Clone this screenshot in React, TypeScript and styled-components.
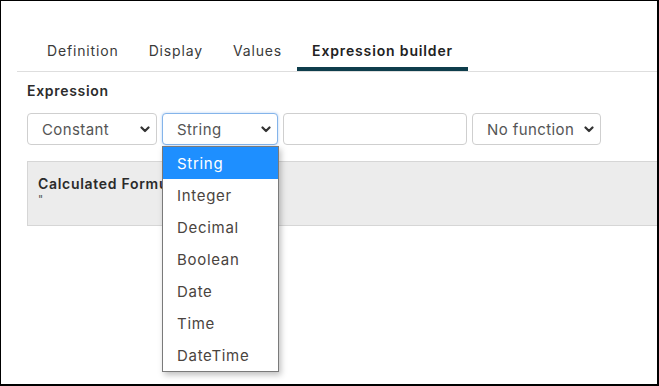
import React from 'react';
import styled, { createGlobalStyle } from 'styled-components';

const GlobalStyle = createGlobalStyle`
    html, body {
        margin: 0;
        padding: 0;
        background: #fff;
    }
    * {
        box-sizing: border-box;
    }
`;

const Frame = styled.div`
    width: 659px;
    height: 386px;
    border-style: solid;
    border-color: #000;
    border-width: 1px 2px 2px 1px;
    overflow: hidden;
    padding-top: 31px;
    font-family: Inter, "Open Sans", sans-serif;
    letter-spacing: 0.7px;
    color: #333;
`;

const TabBar = styled.nav`
    display: flex;
    margin-left: 16px;
    padding-left: 15px;
    border-bottom: 1px solid #dedede;
`;

const Tab = styled.div<{ active?: boolean }>`
    padding: 8px 15px 6px;
    font-size: 14px;
    line-height: 21px;
    letter-spacing: 0.85px;
    font-weight: ${p => (p.active ? 600 : 400)};
    color: ${p => (p.active ? '#222' : '#3a3a3a')};
    border-bottom: 4px solid ${p => (p.active ? '#0e3d4c' : 'transparent')};
`;

const Content = styled.div`
    padding-left: 26px;
`;

const Label = styled.div`
    margin-top: 9px;
    font-size: 14px;
    line-height: 20px;
    font-weight: 600;
    color: #2c2c2c;
`;

const Row = styled.div`
    display: flex;
    gap: 5px;
    margin-top: 12px;
`;

const SelectWrap = styled.div`
    position: relative;
`;

const SelectBox = styled.div<{ width: number; focused?: boolean }>`
    width: ${p => p.width}px;
    height: 32px;
    display: flex;
    align-items: center;
    justify-content: space-between;
    padding: 0 6px 0 14px;
    border: 1px solid ${p => (p.focused ? '#84b4ea' : '#cfcfcf')};
    border-radius: 4px;
    box-shadow: ${p => (p.focused ? '0 0 3px rgba(90, 150, 230, 0.45)' : 'none')};
    font-size: 15px;
    letter-spacing: 0.4px;
    color: #555;
    background: #fff;
`;

const TextInput = styled.div`
    width: 184px;
    height: 32px;
    border: 1px solid #cfcfcf;
    border-radius: 4px;
`;

const Chevron = () => (
    <svg width="10" height="7" viewBox="0 0 10 7" fill="none" stroke="#333" strokeWidth="2.2" strokeLinecap="round" strokeLinejoin="round">
        <path d="M1.5 1.5L5 5l3.5-3.5" />
    </svg>
);

const Panel = styled.div`
    margin-top: 16px;
    margin-right: -4px;
    height: 65px;
    background: #ececec;
    border: 1px solid #d6d6d6;
    padding: 12px 10px 0;
`;

const PanelTitle = styled.div`
    font-size: 14px;
    line-height: 20px;
    font-weight: 600;
    color: #2a2a2a;
`;

const PanelValue = styled.div`
    font-size: 11px;
    line-height: 10px;
    color: #555;
`;

const Dropdown = styled.ul`
    position: absolute;
    top: 33px;
    left: 0;
    width: 117px;
    margin: 0;
    padding: 0;
    list-style: none;
    background: #fff;
    border: 1px solid #7a7a7a;
    box-shadow: 2px 3px 6px rgba(0, 0, 0, 0.25);
    z-index: 10;
`;

const Option = styled.li<{ selected?: boolean }>`
    height: 32px;
    display: flex;
    align-items: center;
    padding-left: 14px;
    font-size: 15px;
    color: ${p => (p.selected ? '#fff' : '#4a4440')};
    background: ${p => (p.selected ? '#1e8fff' : 'transparent')};
`;

const types = ['String', 'Integer', 'Decimal', 'Boolean', 'Date', 'Time', 'DateTime'];

export default function App() {
    return (
        <>
            <GlobalStyle />
            <Frame>
                <TabBar>
                    <Tab>Definition</Tab>
                    <Tab>Display</Tab>
                    <Tab>Values</Tab>
                    <Tab active>Expression builder</Tab>
                </TabBar>
                <Content>
                    <Label>Expression</Label>
                    <Row>
                        <SelectBox width={130}>
                            Constant <Chevron />
                        </SelectBox>
                        <SelectWrap>
                            <SelectBox width={116} focused>
                                String <Chevron />
                            </SelectBox>
                            <Dropdown>
                                {types.map(t => (
                                    <Option key={t} selected={t === 'String'}>{t}</Option>
                                ))}
                            </Dropdown>
                        </SelectWrap>
                        <TextInput />
                        <SelectBox width={129}>
                            No function <Chevron />
                        </SelectBox>
                    </Row>
                    <Panel>
                        <PanelTitle>Calculated Formula</PanelTitle>
                        <PanelValue>"</PanelValue>
                    </Panel>
                </Content>
            </Frame>
        </>
    );
}
